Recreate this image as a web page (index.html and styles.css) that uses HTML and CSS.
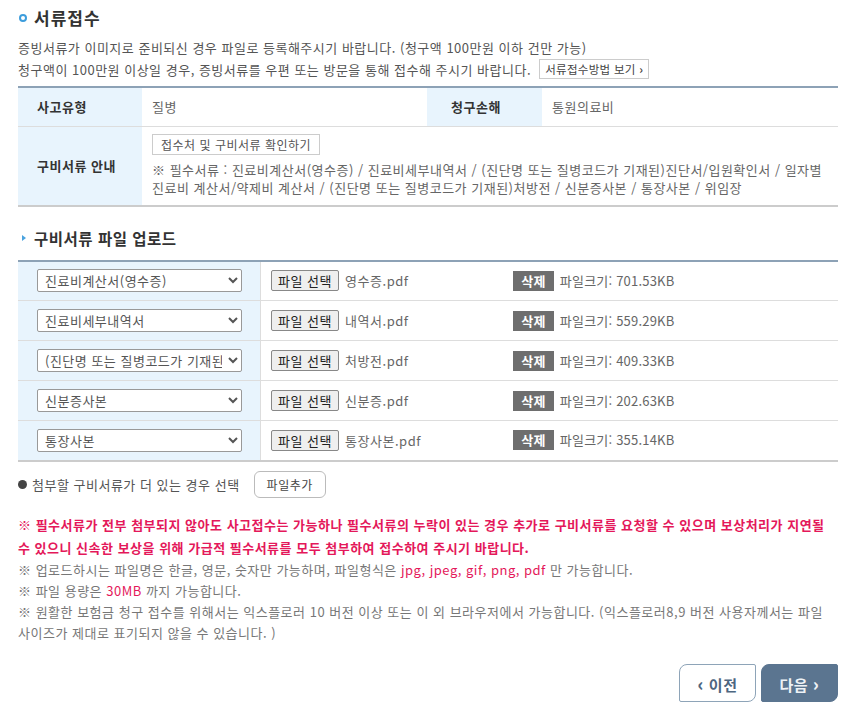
FILE: index.html
```html
<!DOCTYPE html>
<html lang="ko">

<head>
    <meta charset="UTF-8">
    <meta name="viewport" content="width=device-width, initial-scale=1.0">
    <title>서류접수</title>
    <link rel="stylesheet" href="styles.css">
</head>

<body>
    <div class="wrap">
        <h2 class="title"><span class="dot"></span>서류접수</h2>
        <p class="desc">증빙서류가 이미지로 준비되신 경우 파일로 등록해주시기 바랍니다. (청구액 100만원 이하 건만 가능)</p>
        <p class="desc">청구액이 100만원 이상일 경우, 증빙서류를 우편 또는 방문을 통해 접수해 주시기 바랍니다.
            <button type="button" class="btn-guide">서류접수방법 보기 <b>&rsaquo;</b></button>
        </p>

        <table class="info">
            <tr class="row-top">
                <th class="col-label">사고유형</th>
                <td class="col-value">질병</td>
                <th class="col-label2">청구손해</th>
                <td>통원의료비</td>
            </tr>
            <tr class="row-docs">
                <th class="col-label">구비서류 안내</th>
                <td colspan="3">
                    <button type="button" class="btn-check">접수처 및 구비서류 확인하기</button>
                    <p class="doc-list">※ 필수서류 : 진료비계산서(영수증) / 진료비세부내역서 / (진단명 또는 질병코드가 기재된)진단서/입원확인서 / 일자별 진료비 계산서/약제비 계산서 / (진단명 또는 질병코드가 기재된)처방전 / 신분증사본 / 통장사본 / 위임장</p>
                </td>
            </tr>
        </table>

        <h3 class="subtitle"><span class="tri"></span>구비서류 파일 업로드</h3>

        <table class="upload">
            <tr>
                <td class="col-select">
                    <select><option>진료비계산서(영수증)</option></select>
                </td>
                <td class="col-file"><span class="btn-file">파일 선택</span> 영수증.pdf</td>
                <td class="col-size"><span class="btn-del">삭제</span> 파일크기: 701.53KB</td>
            </tr>
            <tr>
                <td class="col-select">
                    <select><option>진료비세부내역서</option></select>
                </td>
                <td class="col-file"><span class="btn-file">파일 선택</span> 내역서.pdf</td>
                <td class="col-size"><span class="btn-del">삭제</span> 파일크기: 559.29KB</td>
            </tr>
            <tr>
                <td class="col-select">
                    <select><option>(진단명 또는 질병코드가 기재된)처방전</option></select>
                </td>
                <td class="col-file"><span class="btn-file">파일 선택</span> 처방전.pdf</td>
                <td class="col-size"><span class="btn-del">삭제</span> 파일크기: 409.33KB</td>
            </tr>
            <tr>
                <td class="col-select">
                    <select><option>신분증사본</option></select>
                </td>
                <td class="col-file"><span class="btn-file">파일 선택</span> 신분증.pdf</td>
                <td class="col-size"><span class="btn-del">삭제</span> 파일크기: 202.63KB</td>
            </tr>
            <tr>
                <td class="col-select">
                    <select><option>통장사본</option></select>
                </td>
                <td class="col-file"><span class="btn-file">파일 선택</span> 통장사본.pdf</td>
                <td class="col-size"><span class="btn-del">삭제</span> 파일크기: 355.14KB</td>
            </tr>
        </table>

        <div class="add-row">
            <span class="bullet"></span>첨부할 구비서류가 더 있는 경우 선택
            <button type="button" class="btn-add">파일추가</button>
        </div>

        <div class="notes">
            <p class="warn">※ 필수서류가 전부 첨부되지 않아도 사고접수는 가능하나 필수서류의 누락이 있는 경우 추가로 구비서류를 요청할 수 있으며 보상처리가 지연될 수 있으니 신속한 보상을 위해 가급적 필수서류를 모두 첨부하여 접수하여 주시기 바랍니다.</p>
            <p>※ 업로드하시는 파일명은 한글, 영문, 숫자만 가능하며, 파일형식은 <em>jpg, jpeg, gif, png, pdf</em> 만 가능합니다.</p>
            <p>※ 파일 용량은 <em>30MB</em> 까지 가능합니다.</p>
            <p>※ 원활한 보험금 청구 접수를 위해서는 익스플로러 10 버전 이상 또는 이 외 브라우저에서 가능합니다. (익스플로러8,9 버전 사용자께서는 파일 사이즈가 제대로 표기되지 않을 수 있습니다. )</p>
        </div>

        <div class="nav">
            <button type="button" class="btn-prev"><b>&lsaquo;</b> 이전</button>
            <button type="button" class="btn-next">다음 <b>&rsaquo;</b></button>
        </div>
    </div>
</body>

</html>
```

FILE: styles.css
```css
body {
    margin: 0;
    font-family: "Noto Sans CJK KR", "Noto Sans", sans-serif;
    color: #555;
    font-size: 13px;
    letter-spacing: 0.5px;
}

.wrap {
    width: 820px;
    padding: 0 0 0 18px;
}

.title {
    display: flex;
    align-items: center;
    margin: 5px 0 6px;
    font-size: 17px;
    letter-spacing: 1px;
    color: #333;
    line-height: 26px;
}

.dot {
    width: 4px;
    height: 4px;
    border: 2px solid #3d9ddc;
    border-radius: 50%;
    margin: 0 7px 0 1px;
}

.desc {
    margin: 0;
    line-height: 22px;
}

.btn-guide {
    font-family: inherit;
    font-size: 11.5px;
    letter-spacing: 0.3px;
    color: #444;
    background: #fff;
    border: 1px solid #ccc;
    padding: 0 5px;
    height: 20px;
    margin-left: 4px;
    vertical-align: 1px;
}

table {
    width: 100%;
    border-collapse: collapse;
}

.info {
    margin-top: 5px;
    border-top: 2px solid #8da2b6;
    border-bottom: 2px solid #ccc;
}

.info th {
    background: #e8f4fd;
    text-align: left;
    font-weight: bold;
    color: #333;
    padding: 0 0 0 19px;
}

.info td {
    padding: 0 10px;
    color: #666;
}

.row-top {
    height: 39px;
    border-bottom: 1px solid #ddd;
}

.col-label {
    width: 105px;
}

.col-value {
    width: 265px;
}

.col-label2 {
    width: 91px;
    padding-left: 24px !important;
}

.row-docs td {
    padding: 7px 10px 8px;
}

.btn-check {
    font-family: inherit;
    font-size: 12px;
    letter-spacing: 0.5px;
    color: #555;
    background: #fff;
    border: 1px solid #ccc;
    height: 21px;
    padding: 0 8px;
}

.doc-list {
    margin: 6px 0 0;
    line-height: 18px;
}

.subtitle {
    display: flex;
    align-items: center;
    margin: 21px 0 12px;
    font-size: 15.5px;
    letter-spacing: 0.5px;
    color: #333;
    line-height: 20px;
}

.tri {
    width: 0;
    height: 0;
    border-left: 4px solid #4aa3df;
    border-top: 3px solid transparent;
    border-bottom: 3px solid transparent;
    margin: 0 8px 0 4px;
}

.upload {
    border-top: 2px solid #8da2b6;
    border-bottom: 2px solid #ccc;
}

.upload tr {
    height: 40px;
    border-bottom: 1px solid #ddd;
}

.col-select {
    width: 223px;
    background: #e8f4fd;
    padding: 0 0 0 19px;
    border-right: 1px solid #ddd;
}

.col-select select {
    width: 205px;
    height: 23px;
    font-family: inherit;
    font-size: 13px;
    letter-spacing: 0.5px;
    color: #555;
    border: 1px solid #999;
    border-radius: 2px;
    background: #fff;
    padding: 0 3px;
}

.col-file {
    width: 240px;
    padding-left: 10px;
    color: #666;
}

.btn-file {
    display: inline-block;
    border: 1px solid #888;
    border-radius: 2px;
    background: #efefef;
    color: #222;
    padding: 0 6px;
    line-height: 19px;
    margin-right: 2px;
}

.col-size {
    color: #666;
    letter-spacing: 0.2px;
}

.btn-del {
    display: inline-block;
    background: #6e6e6e;
    color: #fff;
    font-weight: bold;
    width: 41px;
    text-align: center;
    line-height: 20px;
    margin-right: 2px;
}

.add-row {
    display: flex;
    align-items: center;
    margin-top: 9px;
    color: #555;
}

.bullet {
    width: 9px;
    height: 9px;
    border-radius: 50%;
    background: #444;
    margin-right: 5px;
}

.btn-add {
    font-family: inherit;
    font-size: 12px;
    letter-spacing: 0.5px;
    color: #444;
    background: #fff;
    border: 1px solid #bbb;
    border-radius: 6px;
    height: 27px;
    padding: 0 12px;
    margin-left: 14px;
}

.notes {
    margin-top: 15px;
}

.notes p {
    margin: 0;
    line-height: 21px;
    color: #777;
}

.notes .warn {
    color: #e4185a;
    font-weight: bold;
    line-height: 23px;
}

.notes em {
    font-style: normal;
    color: #e4185a;
}

.nav {
    display: flex;
    justify-content: flex-end;
    gap: 5px;
    margin-top: 21px;
}

.nav button {
    width: 77px;
    height: 38px;
    font-family: inherit;
    font-size: 15px;
    letter-spacing: 0.5px;
    font-weight: bold;
    border-radius: 8px 2px 8px 2px;
}

.nav b {
    font-size: 18px;
}

.btn-prev {
    background: #fff;
    color: #4d6680;
    border: 1px solid #8ea4b8;
}

.btn-next {
    background: #5b7590;
    color: #eef2f6;
    border: 1px solid #5b7590;
}
```
